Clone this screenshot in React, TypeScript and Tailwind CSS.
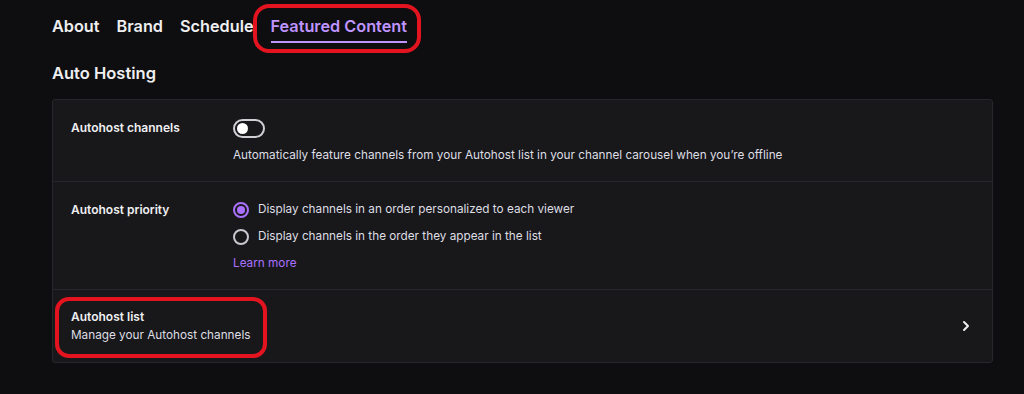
import { ChevronRight } from 'lucide-react';

const font = { fontFamily: 'Inter, "Noto Sans", sans-serif' };

function Toggle() {
  return (
    <div className="w-8 h-[19px] rounded-full border-2 border-[#cfcfd4] flex items-center px-[2px]">
      <div className="w-[11px] h-[11px] rounded-full bg-white" />
    </div>
  );
}

function Radio({ checked, label }: { checked?: boolean; label: string }) {
  return (
    <div className="flex items-center gap-[9px] h-5">
      {checked ? (
        <div className="w-4 h-4 rounded-full border-2 border-[#a970ff] flex items-center justify-center">
          <div className="w-2 h-2 rounded-full bg-[#a970ff]" />
        </div>
      ) : (
        <div className="w-4 h-4 rounded-full border-2 border-[#c8c8cf]" />
      )}
      <span className="text-[11.75px] text-[#dedee3]">{label}</span>
    </div>
  );
}

export default function App() {
  const tabs = ['About', 'Brand', 'Schedule'];

  return (
    <div className="relative w-[1024px] h-[394px] bg-[#0e0e10] text-[#efeff1] overflow-hidden" style={font}>
      {/* Tabs */}
      <div className="flex items-start gap-[17px] pl-[52px] pt-[14px]">
        {tabs.map((t) => (
          <div key={t} className="text-[16.25px] font-semibold leading-6 text-[#efeff1]">
            {t}
          </div>
        ))}
        <div className="flex flex-col">
          <div className="text-[16.25px] font-semibold leading-6 text-[#bf94ff]">Featured Content</div>
          <div className="h-[2px] mt-[3px] bg-[#bf94ff]" />
        </div>
      </div>

      <div className="pl-[52px] pt-[18px] text-[16.5px] font-semibold leading-6">Auto Hosting</div>

      {/* Card */}
      <div className="mx-[52px] mt-[14px] w-[941px] bg-[#18181b] border border-[#26262b] rounded-[3px]">
        <div className="flex px-[18px] pt-[18px] pb-[17px] border-b border-[#26262b]">
          <div className="w-[162px] text-[12px] font-semibold leading-5">Autohost channels</div>
          <div className="flex flex-col gap-2">
            <div className="h-5 flex items-center">
              <Toggle />
            </div>
            <div className="text-[11.75px] leading-[18px] text-[#dedee3]">
              Automatically feature channels from your Autohost list in your channel carousel when you’re offline
            </div>
          </div>
        </div>

        <div className="flex px-[18px] pt-[18px] pb-[17px] border-b border-[#26262b]">
          <div className="w-[162px] text-[12px] font-semibold leading-5">Autohost priority</div>
          <div className="flex flex-col gap-[7px]">
            <Radio checked label="Display channels in an order personalized to each viewer" />
            <Radio label="Display channels in the order they appear in the list" />
            <div className="text-[11.75px] leading-[18px] text-[#a970ff]">Learn more</div>
          </div>
        </div>

        <div className="flex items-center justify-between px-[18px] py-[18px]">
          <div className="flex flex-col">
            <div className="text-[12px] font-semibold leading-[18px]">Autohost list</div>
            <div className="text-[11.75px] leading-[18px] text-[#dedee3]">Manage your Autohost channels</div>
          </div>
          <ChevronRight size={16} strokeWidth={3} className="text-[#efeff1]" />
        </div>
      </div>

      {/* Red annotations */}
      <div className="absolute left-[253px] top-[4px] w-[168px] h-[49px] border-4 border-[#e3141f] rounded-[16px]" />
      <div className="absolute left-[55px] top-[297px] w-[212px] h-[61px] border-4 border-[#e3141f] rounded-[14px]" />
    </div>
  );
}
